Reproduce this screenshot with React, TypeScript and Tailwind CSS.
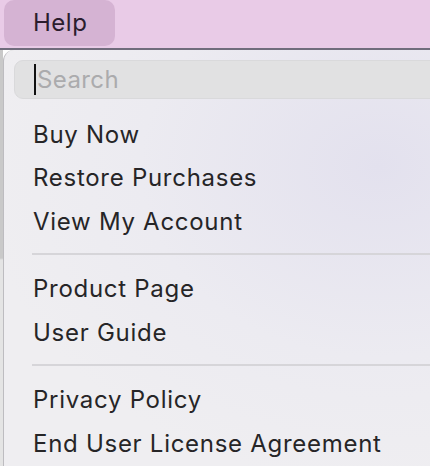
import React from 'react'

const GROUPS = [
  ['Buy Now', 'Restore Purchases', 'View My Account'],
  ['Product Page', 'User Guide'],
  ['Privacy Policy', 'End User License Agreement'],
]

function MenuItem({ label }: { label: string }) {
  return (
    <div className="h-[43.5px] flex items-center pl-[29px] text-[24px] leading-none tracking-[0.72px] text-[#262527] whitespace-nowrap">
      {label}
    </div>
  )
}

export default function App() {
  return (
    <div className="w-[430px] h-[466px] overflow-hidden font-['Inter','Liberation_Sans',sans-serif]">
      {/* menu bar */}
      <div className="h-[50px] bg-[#e9cbe7] border-b-2 border-[#706c7c] flex items-start pl-[4px]">
        <div className="w-[111px] h-[46px] rounded-[10px] bg-[#d5b3d3] flex items-center pl-[29px] text-[24px] tracking-[0.5px] text-[#2b1d2d]">
          Help
        </div>
      </div>

      <div className="flex h-[416px]">
        {/* window edge behind the menu */}
        <div className="w-[3px] shrink-0 bg-[linear-gradient(to_bottom,#c9c9c9_0px,#c9c9c9_208px,#e4e4e4_210px)]" />

        {/* dropdown */}
        <div className="flex-1 min-w-0 border-l border-[#bdbcc0] rounded-tl-[11px] bg-[radial-gradient(ellipse_at_88%_28%,#e3e1ee_0%,#ecebf1_45%,#efeef1_75%)]">
          <div className="pt-[10px] pl-[10px]">
            <div className="h-[39px] -mr-4 rounded-[9px] bg-[#e1e1e2] border border-[#d9d9db] flex items-center pl-[19px]">
              <span className="w-[2px] h-[31px] bg-[#111] mr-px" />
              <span className="text-[24px] tracking-[0.4px] text-[#ababad] leading-none">Search</span>
            </div>
          </div>

          <div className="mt-[13.75px]">
            {GROUPS.map((group, gi) => (
              <div key={gi}>
                {gi > 0 && (
                  <div className="h-[24px] pl-[28px] pt-[9.75px]">
                    <div className="h-[2px] bg-[#d6d5d9]" />
                  </div>
                )}
                {group.map((label) => (
                  <MenuItem key={label} label={label} />
                ))}
              </div>
            ))}
          </div>
        </div>
      </div>
    </div>
  )
}
